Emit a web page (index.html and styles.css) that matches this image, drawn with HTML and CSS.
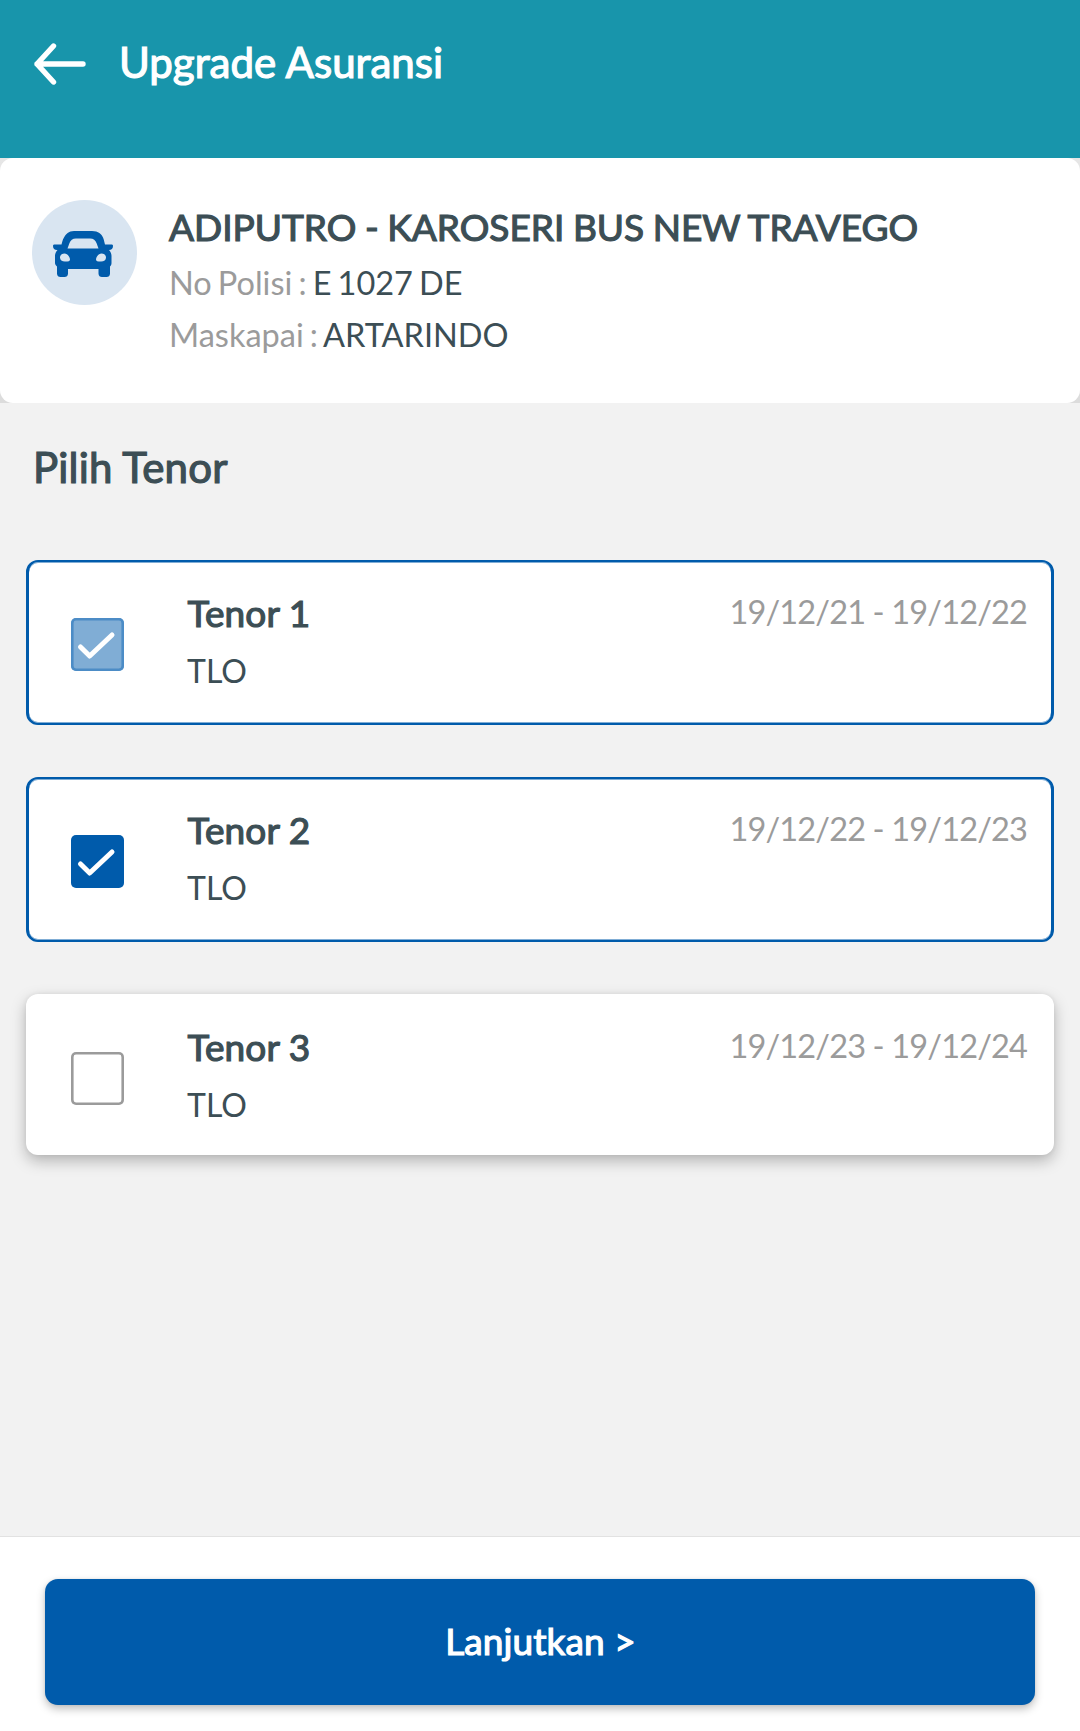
FILE: index.html
```html
<!DOCTYPE html>
<html lang="id">
<head>
<meta charset="utf-8">
<title>Upgrade Asuransi</title>
<link rel="stylesheet" href="styles.css">
</head>
<body>
<div class="screen">
  <header class="topbar">
    <svg class="back" viewBox="0 0 54 44" fill="none" stroke="#fff" stroke-width="5.4" stroke-linecap="round" stroke-linejoin="round"><path d="M20.5 4 4 22l16.500 18M4 22H50"/></svg>
    <h1 class="title strong">Upgrade Asuransi</h1>
  </header>
  <div class="vehicle-wrap">
    <section class="vehicle">
      <div class="avatar">
        <svg class="car" viewBox="0 0 60 46"><path fill="#005bab" fill-rule="evenodd" d="M21 0H39C45.500 0 48.500 3 50 6.500C51 9 51.500 11.500 52 13.500H58.500C59.500 13.500 60 14 60 15C60 17.500 58.500 19 56 19C57.500 20.500 58.500 22.500 58.500 25V32C58.500 33.500 58 34.500 57 35.500V42.500C57 45 55.500 46 53.500 46H49C47 46 45.500 45 45.500 42.500V38H15V42.500C15 45 13.500 46 11.500 46H7.500C5.500 46 4 45 4 42.500V35.500C3 34.500 2 33.500 2 32V25C2 22.500 3 20.500 4.500 19H4C1.500 19 0 17.500 0 15C0 14 .5 13.500 1.500 13.500H8.500C9 11.500 9.500 9 11 6.500C13 3 15.500 0 21 0ZM23 7.500C19.500 7.500 17.500 9.500 16.500 12L14.500 17.500H45.500L43.500 12C42.500 9.500 40.500 7.500 37 7.500ZM11.500 22.500C8.500 22.500 7 24.500 7 26.500C7 29 9 30.500 12 30.500C15.500 30.500 17 30.200 17 28.500C17 26 14.500 22.500 11.500 22.500ZM48.500 22.500C45.500 22.500 43 26 43 28.500C43 30.200 44.500 30.500 48 30.500C51 30.500 53 29 53 26.500C53 24.500 51.500 22.500 48.500 22.500Z"/></svg>
      </div>
      <div class="details">
        <h2 class="name strong">ADIPUTRO - KAROSERI BUS NEW TRAVEGO</h2>
        <p class="line"><span class="muted">No Polisi : </span>E 1027 DE</p>
        <p class="line"><span class="muted">Maskapai : </span>ARTARINDO</p>
      </div>
    </section>
  </div>
  <main class="content">
    <h2 class="heading strong">Pilih Tenor</h2>
    <div class="slot">
      <article class="tenor selected">
        <span class="box checked disabled"><svg viewBox="0 0 53 53" fill="none" stroke="#fff" stroke-width="5" stroke-linecap="round" stroke-linejoin="round"><path d="M9.500 29 18.700 38 41 17"/></svg></span>
        <div class="label"><h3 class="name strong">Tenor 1</h3><p class="type">TLO</p></div>
        <span class="period muted">19/12/21 - 19/12/22</span>
      </article>
    </div>
    <div class="slot">
      <article class="tenor selected">
        <span class="box checked"><svg viewBox="0 0 53 53" fill="none" stroke="#fff" stroke-width="5" stroke-linecap="round" stroke-linejoin="round"><path d="M9.500 29 18.700 38 41 17"/></svg></span>
        <div class="label"><h3 class="name strong">Tenor 2</h3><p class="type">TLO</p></div>
        <span class="period muted">19/12/22 - 19/12/23</span>
      </article>
    </div>
    <div class="slot">
      <article class="tenor raised">
        <span class="box"></span>
        <div class="label"><h3 class="name strong">Tenor 3</h3><p class="type">TLO</p></div>
        <span class="period muted">19/12/23 - 19/12/24</span>
      </article>
    </div>
  </main>
  <footer class="footer">
    <button class="next strong">Lanjutkan &gt;</button>
  </footer>
</div>
</body>
</html>
```
FILE: styles.css
```css
* { box-sizing: border-box; margin: 0; padding: 0; }
body { background: #f2f2f2; font-family: Lato, "Open Sans", sans-serif; color: #3c4e55; }
h1, h2, h3 { font-weight: 400; }
svg { display: block; }
.screen { height: 1731px; display: flex; flex-direction: column; overflow: hidden; }
/* Slightly emboldened regular weight, keeping the regular letter widths */
.strong { -webkit-text-stroke: 1.2px currentColor; }
.muted { color: #9b9b9b; }

.topbar { height: 158px; flex: none; background: #1895ab; color: #fff; display: flex; align-items: flex-start; padding: 36px 33px; gap: 32px; }
.back { width: 54px; height: 44px; margin-top: 6px; }
.title { font-size: 42px; line-height: 52px; }

.vehicle-wrap { flex: none; background: linear-gradient(#e6e6e6, #dcdcdc); }
.vehicle { height: 245px; background: #fff; border-radius: 13px; display: flex; padding: 42px 32px; gap: 32px; }
.avatar { width: 105px; height: 105px; border-radius: 50%; background: #d9e5f1; flex: none; padding: 31px 0 0 21px; }
.car { width: 60px; height: 46px; }
.name { font-size: 37px; line-height: 52px; white-space: nowrap; }
.details { padding-top: 1px; }
.line { font-size: 32.500px; line-height: 52px; white-space: pre; word-spacing: -2.200px; }
.details .name { margin-bottom: 4px; word-spacing: -.9px; }

.content { flex: 1; padding: 38px 26px 0; }
.heading { font-size: 42px; line-height: 52px; padding-left: 7px; margin-bottom: 67px; letter-spacing: .2px; }
.slot { height: 217px; }
.tenor { height: 165px; background: #fff; border-radius: 12px; padding: 27px 27px 0 45px; display: flex; align-items: flex-start; }
.selected { border: solid #005bab; border-width: 2px 3px; padding: 25px 24px 0 42px; box-shadow: inset 0 1px #80add5, inset 0 -1px #80add5; }
.raised { height: 161px; box-shadow: 0 6px 15px rgba(0,0,0,.26), 0 0 5px rgba(0,0,0,.06); }
.box { width: 53px; height: 53px; margin-top: 31px; box-shadow: inset 0 0 0 2.600px #9b9b9b; border-radius: 5px; flex: none; }
.checked { background: #005bab; box-shadow: none; }
.disabled { background: #80add5; box-shadow: inset 0 0 0 2.600px #4c8cc6; }
.label { margin-left: 63.500px; flex: 1; }
.label .name { letter-spacing: .1px; }
.type { font-size: 32px; line-height: 52px; margin: 6px 0 0 -.5px; }
.period { font-size: 32.500px; line-height: 52px; margin-top: -1px; letter-spacing: -.85px; }

.footer { flex: none; height: 195px; background: #fff; border-top: 1px solid #e2e2e2; padding: 42px 45px 0; }
.next { display: block; width: 100%; height: 126px; padding: 0 0 3px 1px; border: 0; border-radius: 13px; background: #005bab; color: #fff; font: 400 37px/52px Lato, sans-serif; letter-spacing: .1px; box-shadow: 0 4px 8px rgba(0,0,0,.25), 0 0 3px rgba(0,0,0,.08); }
```
